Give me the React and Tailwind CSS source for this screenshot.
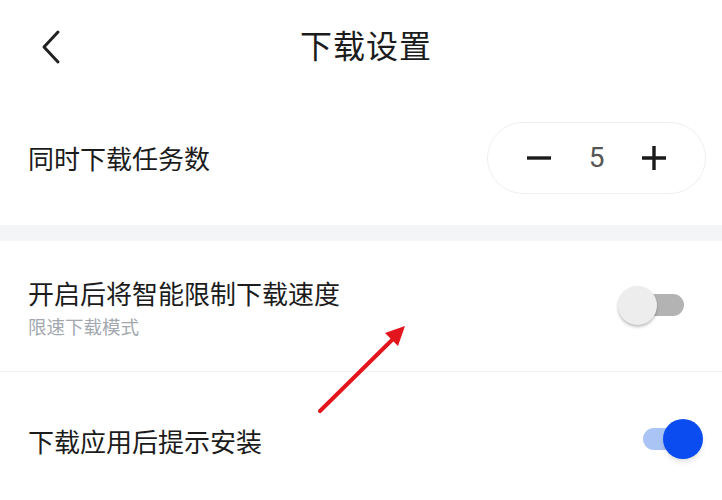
import React, { useState } from 'react';

const font = { fontFamily: '"Noto Sans CJK SC", "Noto Sans", sans-serif' };

const Toggle = ({ on, onClick }) => (
  <button onClick={onClick} className="relative w-[86px] h-[44px] flex items-center">
    {on ? (
      <>
        <div className="absolute left-[25px] w-[50px] h-[22px] rounded-full bg-[#aac4f5]" />
        <div className="absolute left-[45px] w-[40px] h-[40px] rounded-full bg-[#0b4cf0] shadow-md" />
      </>
    ) : (
      <>
        <div className="absolute left-[12px] w-[54px] h-[22px] rounded-full bg-[#b3b3b3]" />
        <div className="absolute left-0 w-[39px] h-[39px] rounded-full bg-[#ededed] shadow-[0_2px_3px_rgba(0,0,0,0.25)]" />
      </>
    )}
  </button>
);

export default function App() {
  const [count, setCount] = useState(5);
  const [limit, setLimit] = useState(false);
  const [prompt, setPrompt] = useState(true);

  return (
    <div className="relative w-[722px] h-[500px] overflow-hidden bg-white text-[#1c1c1c]" style={font}>
      {/* Header */}
      <div className="relative h-[90px] flex items-center justify-center">
        <button className="absolute left-[34px] top-[24px] p-1">
          <svg width="24" height="38" viewBox="0 0 24 38" fill="none">
            <path d="M20 4 L6 19 L20 34" stroke="#222" strokeWidth="3" strokeLinecap="round" strokeLinejoin="round" />
          </svg>
        </button>
        <h1 className="text-[32px] leading-none tracking-[1px] mt-[-2px] ml-[10px]">下载设置</h1>
      </div>

      {/* Concurrent tasks */}
      <div className="h-[135px] flex items-center justify-between pl-[28px] pr-[16px]">
        <span className="text-[26px]">同时下载任务数</span>
        <div className="w-[219px] h-[72px] rounded-full border border-[#efefef] flex items-center justify-between px-[38px]">
          <button onClick={() => setCount(Math.max(1, count - 1))}>
            <svg width="26" height="26" viewBox="0 0 26 26">
              <path d="M1 13 H25" stroke="#1a1a1a" strokeWidth="3.4" />
            </svg>
          </button>
          <span className="text-[28px] text-[#555] leading-none" style={{ fontFamily: 'Roboto, sans-serif' }}>{count}</span>
          <button onClick={() => setCount(count + 1)}>
            <svg width="26" height="26" viewBox="0 0 26 26">
              <path d="M1 13 H25 M13 1 V25" stroke="#1a1a1a" strokeWidth="3.4" />
            </svg>
          </button>
        </div>
      </div>

      <div className="h-[16px] bg-[#f4f5f7]" />

      {/* Speed limit */}
      <div className="h-[131px] flex items-center justify-between pl-[28px] pr-[18px] border-b border-[#f2f2f2]">
        <div className="flex flex-col mt-[2px]">
          <span className="text-[26px] leading-[34px]">开启后将智能限制下载速度</span>
          <span className="text-[18.5px] leading-[24px] text-[#a3a8b0] mt-[4px]">限速下载模式</span>
        </div>
        <div className="mt-[-2px]">
          <Toggle on={limit} onClick={() => setLimit(!limit)} />
        </div>
      </div>

      {/* Install prompt */}
      <div className="h-[136px] flex items-center justify-between pl-[28px] pr-[18px]">
        <span className="text-[26px]">下载应用后提示安装</span>
        <div className="mt-[-2px]">
          <Toggle on={prompt} onClick={() => setPrompt(!prompt)} />
        </div>
      </div>

      {/* Annotation arrow */}
      <svg className="absolute left-0 top-0 pointer-events-none" width="722" height="500">
        <line x1="320" y1="411" x2="394" y2="338" stroke="#e3161d" strokeWidth="4" strokeLinecap="round" />
        <polygon points="405,326 385,333 398,346" fill="#e3161d" />
      </svg>
    </div>
  );
}
